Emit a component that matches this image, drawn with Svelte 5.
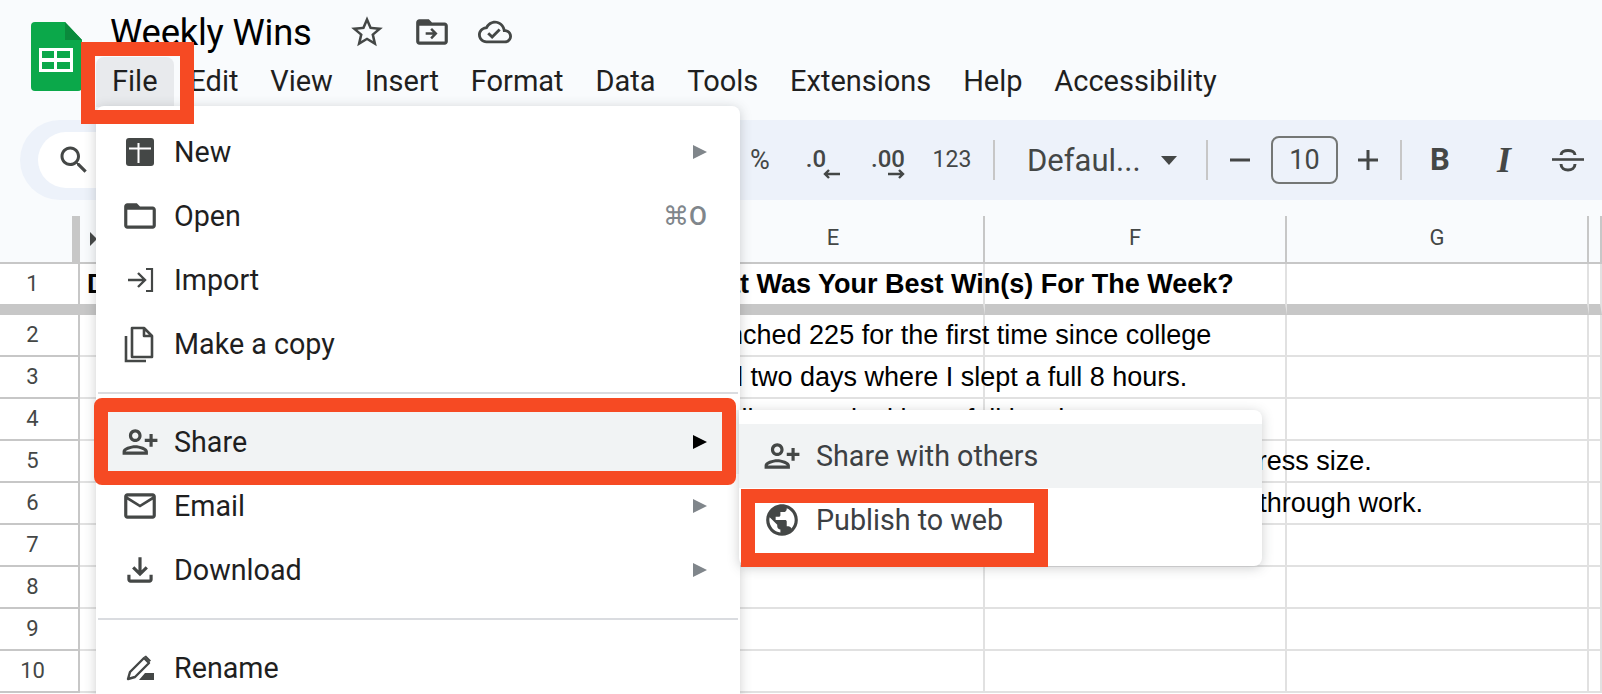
<script lang="ts">
  const menus = ['File', 'Edit', 'View', 'Insert', 'Format', 'Data', 'Tools', 'Extensions', 'Help', 'Accessibility'];

  const fileMenu = [
    [
      { label: 'New', icon: 'new', arrow: true },
      { label: 'Open', icon: 'folder', shortcut: '⌘O' },
      { label: 'Import', icon: 'import' },
      { label: 'Make a copy', icon: 'copy' }
    ],
    [
      { label: 'Share', icon: 'person', arrow: true, active: true },
      { label: 'Email', icon: 'mail', arrow: true },
      { label: 'Download', icon: 'download', arrow: true }
    ],
    [{ label: 'Rename', icon: 'rename' }]
  ];

  const columns = ['', 'E', 'F', 'G', ''];

  const rows = [
    { a: 'Date', text: 'What Was Your Best Win(s) For The Week?' },
    { text: 'I benched 225 for the first time since college' },
    { text: 'I had two days where I slept a full 8 hours.' },
    { text: 'I finally started taking a full lunch.' },
    { text: 'I got compliments from my wife on losing a full dress size.' },
    { text: 'I took a 30 min walk each day at lunch to power through work.' },
    { text: '' },
    { text: '' },
    { text: '' },
    { text: '' }
  ];

  const paths: Record<string, string> = {
    folder: 'M20 6h-8l-2-2H4c-1.1 0-2 .9-2 2v12c0 1.1.9 2 2 2h16c1.1 0 2-.9 2-2V8c0-1.1-.9-2-2-2zm0 12H4V8h16v10z',
    mail: 'M20 4H4c-1.1 0-2 .9-2 2v12c0 1.1.9 2 2 2h16c1.1 0 2-.9 2-2V6c0-1.1-.9-2-2-2zm0 14H4V8l8 5 8-5v10zm-8-7L4 6h16l-8 5z',
    download: 'M18 15v3H6v-3H4v3c0 1.1.9 2 2 2h12c1.1 0 2-.9 2-2v-3h-2zm-1-4l-1.41-1.41L13 12.17V4h-2v8.17L8.41 9.59 7 11l5 5 5-5z',
    globe: 'M12 2C6.48 2 2 6.48 2 12s4.48 10 10 10 10-4.48 10-10S17.52 2 12 2zM4 12c0-.61.08-1.21.21-1.78L8.99 15v1c0 1.1.9 2 2 2v1.93C7.06 19.43 4 16.07 4 12zm13.89 5.4c-.26-.81-1-1.4-1.9-1.4h-1v-3c0-.55-.45-1-1-1h-6v-2h2c.55 0 1-.45 1-1V7h2c1.1 0 2-.9 2-2v-.41C17.92 5.77 20 8.65 20 12c0 2.08-.81 3.98-2.11 5.4z'
  };
  const personPath = 'M15 12c2.21 0 4-1.79 4-4s-1.79-4-4-4-4 1.79-4 4 1.79 4 4 4zm0-6c1.1 0 2 .9 2 2s-.9 2-2 2-2-.9-2-2 .9-2 2-2zm0 8c-2.67 0-8 1.34-8 4v2h16v-2c0-2.66-5.33-4-8-4zm-6 4c.22-.72 3.31-2 6-2 2.7 0 5.8 1.29 6 2H9zm-3-3v-3h3v-2H6V7H4v3H1v2h3v3h2z';
</script>

{#snippet icon(name: string)}
  <span class="icon">
    {#if name === 'new'}
      <svg width="28" height="28" viewBox="0 0 28 28">
        <rect width="28" height="28" rx="3" fill="#444746" />
        <path d="M3 10.5h22M12.5 5v20" stroke="#fff" stroke-width="2" />
      </svg>
    {:else if name === 'import'}
      <svg width="32" height="32" viewBox="0 0 32 32" fill="none" stroke="#444746" stroke-width="2.4">
        <path d="M4 16h17M14 9l7 7-7 7" />
        <path d="M22 5h6v22h-6" stroke-width="2.2" />
      </svg>
    {:else if name === 'copy'}
      <svg width="32" height="38" viewBox="0 0 32 38" fill="none" stroke="#444746" stroke-width="2.6">
        <path d="M8 3h12l8 8v21H8zM20 3v8h8" stroke-linejoin="round" />
        <path d="M2 11v25h20" />
      </svg>
    {:else if name === 'rename'}
      <svg width="30" height="26" viewBox="0 0 30 26">
        <path d="M3 24l2-7L19 3l5 5-14 14z" fill="none" stroke="#444746" stroke-width="2.4" stroke-linejoin="round" />
        <path d="M19 1.500l2-1 5 5-1.500 1.500zM14 25l6-7h9v7z" fill="#444746" />
      </svg>
    {:else if name === 'person'}
      <svg width="38" height="38" viewBox="0 0 24 24" fill="#444746">
        <g transform="translate(24 0) scale(-1 1)"><path d={personPath} /></g>
      </svg>
    {:else}
      <svg width="38" height="38" viewBox="0 0 24 24" fill="#444746"><path d={paths[name]} /></svg>
    {/if}
  </span>
{/snippet}

<div class="page">
  <header>
    <div class="top">
      <svg class="logo" width="51" height="69" viewBox="0 0 51 69">
        <path d="M4 0h30l17 18v47a4 4 0 0 1-4 4H4a4 4 0 0 1-4-4V4a4 4 0 0 1 4-4z" fill="#0ba84a" />
        <path d="M34 0l17 18H34z" fill="#0a8a3c" />
        <path d="M8 26h34v24H8zM11 29v7h12v-7zm15 0v7h13v-7zM11 40v7h12v-7zm15 0v7h13v-7z" fill="#fff" fill-rule="evenodd" />
      </svg>
      <div class="titles">
        <div class="title-row">
          <h1>Weekly Wins</h1>
          <div class="doc-icons">
            <svg width="38" height="38" viewBox="0 0 24 24" fill="#444746"><path d="M22 9.240l-7.190-.62L12 2 9.190 8.630 2 9.240l5.460 4.730L5.820 21 12 17.270 18.180 21l-1.630-7.030L22 9.240zM12 15.400l-3.760 2.270 1-4.280-3.320-2.880 4.380-.38L12 6.100l1.710 4.040 4.380.38-3.320 2.880 1 4.280L12 15.400z" /></svg>
            <svg width="38" height="38" viewBox="0 0 24 24" fill="#444746"><path d={paths.folder} /><path d="M12 9.500l-1.100 1.100 1.600 1.600H8v1.600h4.500l-1.600 1.600 1.100 1.100 3.500-3.500z" /></svg>
            <svg width="34" height="34" viewBox="0 0 24 24" fill="#444746"><path d="M19.350 10.040C18.670 6.590 15.640 4 12 4 9.110 4 6.600 5.640 5.350 8.040 2.340 8.360 0 10.910 0 14c0 3.310 2.690 6 6 6h13c2.760 0 5-2.240 5-5 0-2.640-2.050-4.780-4.650-4.960zM19 18H6c-2.210 0-4-1.790-4-4 0-2.050 1.530-3.760 3.560-3.970l1.070-.11.5-.95C8.080 7.140 9.940 6 12 6c2.620 0 4.880 1.860 5.390 4.430l.3 1.500 1.530.11c1.560.1 2.780 1.410 2.780 2.960 0 1.650-1.350 3-3 3zm-9-3.820l-2.090-2.090L6.500 13.500 10 17l6.010-6.010-1.410-1.410z" /></svg>
          </div>
        </div>
        <nav>
          {#each menus as m, i}
            <span class:open={i === 0}>{m}</span>
          {/each}
        </nav>
      </div>
    </div>

    <div class="toolbar">
      <div class="search">
        <svg width="36" height="36" viewBox="0 0 24 24" fill="#444746"><path d="M15.500 14h-.79l-.28-.27C15.410 12.590 16 11.110 16 9.500 16 5.910 13.090 3 9.500 3S3 5.910 3 9.500 5.910 16 9.500 16c1.610 0 3.090-.59 4.230-1.570l.27.28v.79l5 4.990L20.490 19l-4.990-5zm-6 0C7.010 14 5 11.990 5 9.500S7.010 5 9.500 5 14 7.010 14 9.500 11.990 14 9.500 14z" /></svg>
      </div>
      <span class="btn percent">%</span>
      <span class="btn decimal">
        <span class="shift">.0</span>
        <svg class="left" width="17" height="10" viewBox="0 0 17 10" fill="none" stroke="#444746" stroke-width="2.4"><path d="M17 5H2M6 1L2 5l4 4" /></svg>
      </span>
      <span class="btn decimal">
        <span>.00</span>
        <svg class="right" width="17" height="10" viewBox="0 0 17 10" fill="none" stroke="#444746" stroke-width="2.4"><path d="M0 5h15M11 1l4 4-4 4" /></svg>
      </span>
      <span class="btn">123</span>
      <i class="sep s1"></i>
      <span class="font-select">Defaul...</span>
      <svg class="caret" width="16" height="9" viewBox="0 0 16 9"><path d="M0 0h16L8 9z" fill="#444746" /></svg>
      <i class="sep s2"></i>
      <span class="step">
        <svg width="22" height="22" viewBox="0 0 22 22"><path d="M1 11h20" stroke="#444746" stroke-width="3" /></svg>
      </span>
      <span class="size">10</span>
      <span class="step">
        <svg width="22" height="22" viewBox="0 0 22 22"><path d="M1 11h20M11 1v20" stroke="#444746" stroke-width="3" /></svg>
      </span>
      <i class="sep s3"></i>
      <span class="fmt bold">B</span>
      <span class="fmt ital">I</span>
      <span class="fmt">
        <svg width="34" height="26" viewBox="0 0 34 26" fill="none" stroke="#444746">
          <path d="M1 12.500h32" stroke-width="2.600" />
          <path d="M10 8c0-6 14-6 14 0M10 17c0 8 14 8 14 0" stroke-width="3" />
        </svg>
      </span>
    </div>
  </header>

  <div class="grid">
    <div class="corner"><svg width="7" height="14" viewBox="0 0 7 14"><path d="M0 0l7 7-7 7z" fill="#444746" /></svg></div>
    {#each columns as col}
      <div class="col">{col}</div>
    {/each}

    {#each rows as row, i}
      <div class="num" class:frozen={i === 0}>{i + 1}</div>
      <div class="cell first" class:frozen={i === 0} class:head={i === 0}>{row.a ?? ''}<span class="text">{row.text}</span></div>
      <div class="cell" class:frozen={i === 0}></div>
      <div class="cell" class:frozen={i === 0}></div>
      <div class="cell" class:frozen={i === 0}></div>
      <div class="cell" class:frozen={i === 0}></div>
    {/each}
  </div>

  <div class="menu">
    {#each fileMenu as group, g}
      {#if g > 0}<hr />{/if}
      {#each group as item}
        <div class="item" class:active={item.active}>
          {@render icon(item.icon)}
          <span class="label">{item.label}</span>
          {#if item.shortcut}<span class="shortcut">{item.shortcut}</span>{/if}
          {#if item.arrow}<span class="arrow"></span>{/if}
        </div>
      {/each}
    {/each}
  </div>

  <div class="submenu">
    <div class="item active">
      {@render icon('person')}
      <span class="label">Share with others</span>
    </div>
    <div class="item">
      {@render icon('globe')}
      <span class="label">Publish to web</span>
    </div>
  </div>

  <div class="mark mark-file"></div>
  <div class="mark mark-share"></div>
  <div class="mark mark-publish"></div>
</div>

<style>
  :global(body) {
    margin: 0;
    background: #fff;
  }
  .page {
    position: relative;
    width: 1602px;
    height: 694px;
    overflow: hidden;
    font-family: Roboto, sans-serif;
    color: #1f1f1f;
  }
  header {
    height: 216px;
    background: #f9fbfd;
  }
  .top {
    display: flex;
    height: 120px;
    box-sizing: border-box;
    padding: 22px 0 0 31px;
  }
  .logo {
    flex: none;
  }
  .titles {
    margin-left: 28px;
    margin-top: -14px;
  }
  .title-row {
    display: flex;
    align-items: center;
    height: 48px;
  }
  h1 {
    margin: 0;
    font-size: 36.400px;
    font-weight: 400;
    color: #000;
    letter-spacing: -0.2px;
  }
  .doc-icons {
    display: flex;
    align-items: center;
    gap: 27px;
    margin-left: 36px;
  }
  nav {
    display: flex;
    gap: 31.800px;
    margin: 2px 0 0 2px;
    font-size: 29px;
    line-height: 46px;
    color: #1f1f1f;
  }
  nav .open {
    margin: -1px -16px 0 -16px;
    padding: 1px 16px 3px 16px;
    background: #e8eaed;
    border-radius: 8px 8px 0 0;
  }
  .toolbar {
    display: flex;
    align-items: center;
    height: 80px;
    margin-left: 20px;
    padding-left: 18px;
    background: #edf2fa;
    border-radius: 40px 0 0 40px;
    color: #444746;
  }
  .search {
    box-sizing: border-box;
    width: 120px;
    height: 56px;
    margin-right: 570px;
    padding: 10px 0 0 18px;
    background: #fff;
    border-radius: 28px 0 0 28px;
  }
  .btn {
    display: flex;
    flex-direction: column;
    align-items: center;
    justify-content: center;
    width: 64px;
    font-size: 23px;
    line-height: 28px;
    color: #444746;
  }
  .percent {
    font-size: 27px;
  }
  .decimal {
    font-size: 24px;
    font-weight: 500;
    line-height: 22px;
    margin-top: 6px;
  }
  .decimal span {
    display: block;
  }
  .decimal .shift {
    margin-right: 16px;
  }
  .decimal .left {
    margin: -1px 0 0 15px;
  }
  .decimal .right {
    margin: -1px 0 0 16px;
  }
  .sep {
    width: 2px;
    height: 40px;
    background: #c7c7c7;
  }
  .s1 {
    margin: 0 32px 0 9px;
  }
  .font-select {
    width: 134px;
    font-size: 31px;
    white-space: nowrap;
  }
  .caret {
    margin-right: 29px;
  }
  .s2 {
    margin-right: 14px;
  }
  .step {
    display: flex;
    align-items: center;
    justify-content: center;
    width: 36px;
    height: 40px;
  }
  .size {
    box-sizing: border-box;
    width: 67px;
    height: 48px;
    margin: 0 12px 0 13px;
    border: 2px solid #747775;
    border-radius: 8px;
    font-size: 27px;
    line-height: 44px;
    text-align: center;
  }
  .s3 {
    margin: 0 6px 0 14px;
  }
  .fmt {
    width: 64px;
    text-align: center;
    font-size: 31px;
    color: #444746;
    line-height: 36px;
  }
  .fmt svg {
    display: block;
    margin: 0 auto;
  }
  .bold {
    font-weight: 700;
  }
  .ital {
    font-family: 'Liberation Serif', serif;
    font-size: 36px;
    font-style: italic;
    font-weight: 700;
  }

  .grid {
    display: grid;
    grid-template-columns: 80px 603px 302px 302px 302px 13px;
    grid-template-rows: 48px 51px repeat(9, 42px);
  }
  .corner {
    box-sizing: border-box;
    border-right: 8px solid #c7c7c7;
    border-bottom: 2px solid #c7c7c7;
    width: 80px;
    position: relative;
    background: #f9fbfd;
  }
  .corner svg {
    position: absolute;
    left: 90px;
    top: 16px;
  }
  .col {
    box-sizing: border-box;
    border-right: 2px solid #c7c7c7;
    border-bottom: 2px solid #c7c7c7;
    background: #f9fbfd;
    font-size: 22px;
    color: #444746;
    text-align: center;
    line-height: 44px;
  }
  .num {
    box-sizing: border-box;
    padding-right: 13px;
    border-right: 2px solid #c7c7c7;
    border-bottom: 2px solid #c7c7c7;
    font-size: 22px;
    color: #444746;
    text-align: center;
    line-height: 40px;
  }
  .cell {
    box-sizing: border-box;
    position: relative;
    border-right: 2px solid #e1e1e1;
    border-bottom: 2px solid #e1e1e1;
    font-family: 'Liberation Sans', sans-serif;
    font-size: 27px;
    color: #000;
    line-height: 40px;
    white-space: nowrap;
  }
  .frozen {
    border-bottom: 11px solid #c7c7c7;
  }
  .first {
    padding-left: 7px;
  }
  .head {
    font-weight: 700;
  }
  .text {
    position: absolute;
    z-index: 1;
    left: 603px;
  }

  .menu,
  .submenu {
    position: absolute;
    z-index: 2;
    background: #fff;
    box-shadow: 0 2px 12px rgba(60, 64, 67, 0.25);
    color: #1f1f1f;
  }
  .menu {
    left: 96px;
    top: 106px;
    width: 644px;
    height: 620px;
    padding-top: 14px;
    box-sizing: border-box;
    border-radius: 8px;
  }
  .submenu {
    left: 739px;
    top: 410px;
    width: 523px;
    height: 156px;
    padding-top: 14px;
    box-sizing: border-box;
    border-radius: 0 8px 8px 8px;
  }
  .item {
    display: flex;
    align-items: center;
    height: 64px;
    padding: 0 33px 0 28px;
    font-size: 28.700px;
  }
  .submenu .item {
    padding-left: 27px;
    color: #3c4043;
  }
  .item.active {
    background: #f1f3f4;
  }
  .icon {
    flex: none;
    display: flex;
    align-items: center;
    justify-content: center;
    width: 32px;
    height: 32px;
    margin-right: 18px;
  }
  .icon svg {
    flex: none;
  }
  .label {
    flex: 1;
  }
  .shortcut {
    color: #80868b;
    font-size: 26px;
    font-weight: 500;
  }
  .arrow {
    width: 0;
    height: 0;
    border-left: 14px solid #80868b;
    border-top: 7.500px solid transparent;
    border-bottom: 7.500px solid transparent;
  }
  .item.active .arrow {
    border-left-color: #000;
  }
  hr {
    height: 2px;
    margin: 16px 2px;
    border: 0;
    background: #dadce0;
  }

  .mark {
    position: absolute;
    z-index: 3;
    box-sizing: border-box;
    border: 14px solid #f64a23;
  }
  .mark-file {
    left: 81px;
    top: 42px;
    width: 113px;
    height: 82px;
  }
  .mark-share {
    left: 94px;
    top: 398px;
    width: 642px;
    height: 87px;
    border-radius: 8px;
  }
  .mark-publish {
    left: 741px;
    top: 489px;
    width: 307px;
    height: 78px;
  }
</style>
